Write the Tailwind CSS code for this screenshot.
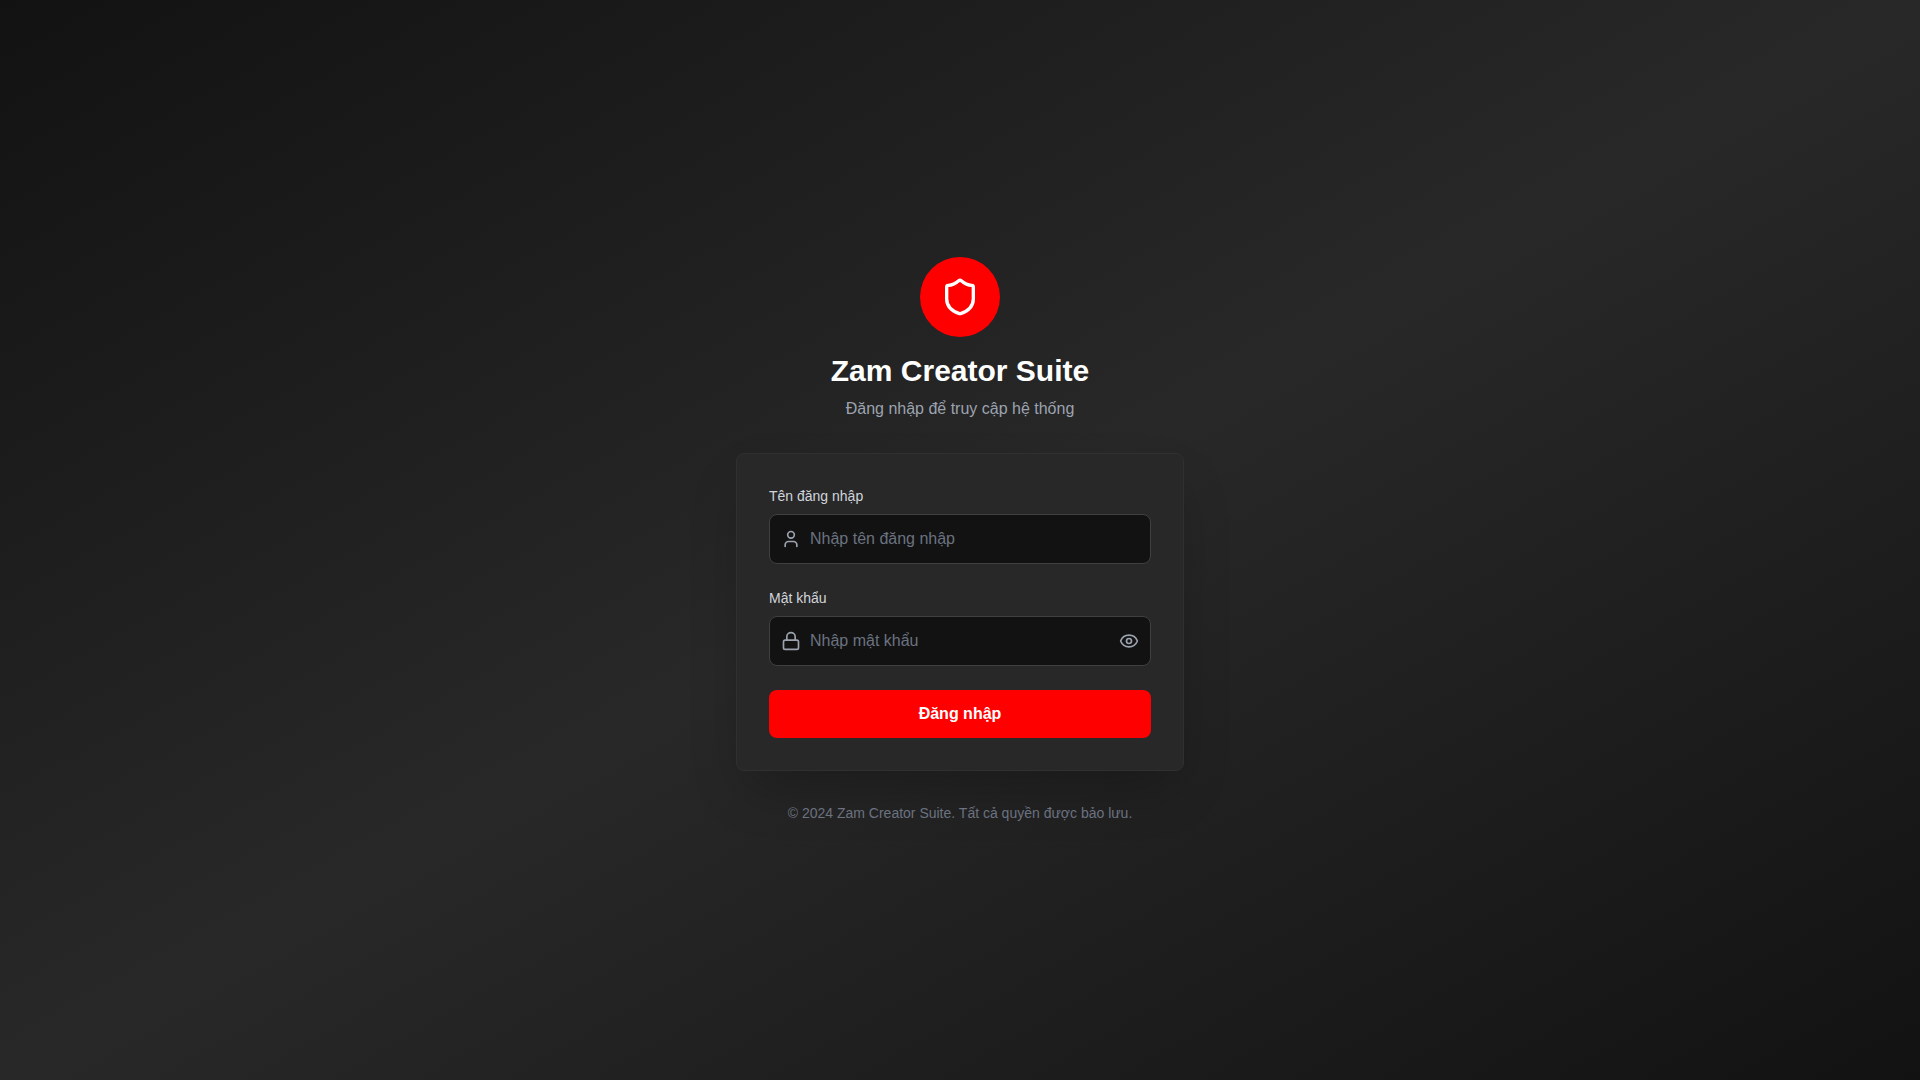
<!DOCTYPE html>
<html lang="vi">

<head>
    <meta charset="UTF-8">
    <meta name="viewport" content="width=device-width, initial-scale=1.0">
    <title>Zam Creator Suite</title>
    <script src="https://cdn.jsdelivr.net/npm/@tailwindcss/browser@4"></script>
</head>

<body class="font-['Liberation_Sans',sans-serif]">
    <main class="min-h-screen bg-linear-to-br/srgb from-[#121212] via-[#282828] to-[#121212] flex items-center justify-center p-4">
        <div class="w-full max-w-md">
            <!-- Header -->
            <div class="text-center mb-8">
                <div class="inline-flex items-center justify-center w-20 h-20 bg-[#ff0000] rounded-full mb-4 align-top">
                    <svg class="w-10 h-10 text-white" viewBox="0 0 24 24" fill="none" stroke="currentColor" stroke-width="2" stroke-linecap="round" stroke-linejoin="round" aria-hidden="true">
                        <path d="M20 13c0 5-3.5 7.5-7.66 8.95a1 1 0 0 1-.67-.01C7.5 20.5 4 18 4 13V6a1 1 0 0 1 1-1c2 0 4.5-1.2 6.24-2.72a1.17 1.17 0 0 1 1.52 0C14.51 3.81 17 5 19 5a1 1 0 0 1 1 1z" />
                    </svg>
                </div>
                <h1 class="text-3xl font-bold text-white mb-2">Zam Creator Suite</h1>
                <p class="text-[#9ca3af]">Đăng nhập để truy cập hệ thống</p>
            </div>

            <!-- Login form -->
            <div class="bg-[#282828] rounded-lg shadow-2xl p-8 border border-[#303030]">
                <form id="loginForm" class="space-y-6">
                    <div>
                        <label for="username" class="block text-sm font-medium text-[#d1d5db] mb-2">Tên đăng nhập</label>
                        <div class="relative">
                            <svg class="absolute left-3 inset-y-0 my-auto w-5 h-5 text-[#9ca3af]" viewBox="0 0 24 24" fill="none" stroke="currentColor" stroke-width="2" stroke-linecap="round" stroke-linejoin="round" aria-hidden="true">
                                <path d="M19 21v-2a4 4 0 0 0-4-4H9a4 4 0 0 0-4 4v2" />
                                <circle cx="12" cy="7" r="4" />
                            </svg>
                            <input type="text" id="username" name="username" placeholder="Nhập tên đăng nhập" class="block w-full pl-10 pr-4 py-3 bg-[#121212] border border-[#404040] rounded-lg text-white placeholder:text-[#6b7280] focus:outline-none focus:border-[#ff0000]" required>
                        </div>
                    </div>
                    <div>
                        <label for="password" class="block text-sm font-medium text-[#d1d5db] mb-2">Mật khẩu</label>
                        <div class="relative">
                            <svg class="absolute left-3 inset-y-0 my-auto w-5 h-5 text-[#9ca3af]" viewBox="0 0 24 24" fill="none" stroke="currentColor" stroke-width="2" stroke-linecap="round" stroke-linejoin="round" aria-hidden="true">
                                <rect width="18" height="11" x="3" y="11" rx="2" ry="2" />
                                <path d="M7 11V7a5 5 0 0 1 10 0v4" />
                            </svg>
                            <input type="password" id="password" name="password" placeholder="Nhập mật khẩu" class="block w-full pl-10 pr-12 py-3 bg-[#121212] border border-[#404040] rounded-lg text-white placeholder:text-[#6b7280] focus:outline-none focus:border-[#ff0000]" required>
                            <button type="button" id="togglePassword" aria-label="Hiện mật khẩu" class="absolute right-3 inset-y-0 flex items-center text-[#9ca3af] hover:text-white">
                                <svg class="w-5 h-5" viewBox="0 0 24 24" fill="none" stroke="currentColor" stroke-width="2" stroke-linecap="round" stroke-linejoin="round" aria-hidden="true">
                                    <path d="M2.062 12.348a1 1 0 0 1 0-.696 10.75 10.75 0 0 1 19.876 0 1 1 0 0 1 0 .696 10.75 10.75 0 0 1-19.876 0" />
                                    <circle cx="12" cy="12" r="3" />
                                </svg>
                            </button>
                        </div>
                    </div>
                    <button type="submit" class="w-full bg-[#ff0000] hover:bg-[#cc0000] text-white font-semibold py-3 px-4 rounded-lg">Đăng nhập</button>
                </form>
            </div>

            <!-- Footer -->
            <p class="text-center mt-8 text-sm text-[#6b7280]">© 2024 Zam Creator Suite. Tất cả quyền được bảo lưu.</p>
        </div>
    </main>
    <script>
        document.getElementById('togglePassword').addEventListener('click', function () {
            const password = document.getElementById('password');
            password.type = password.type === 'password' ? 'text' : 'password';
        });

        document.getElementById('loginForm').addEventListener('submit', function (e) {
            e.preventDefault();
        });
    </script>
</body>

</html>
